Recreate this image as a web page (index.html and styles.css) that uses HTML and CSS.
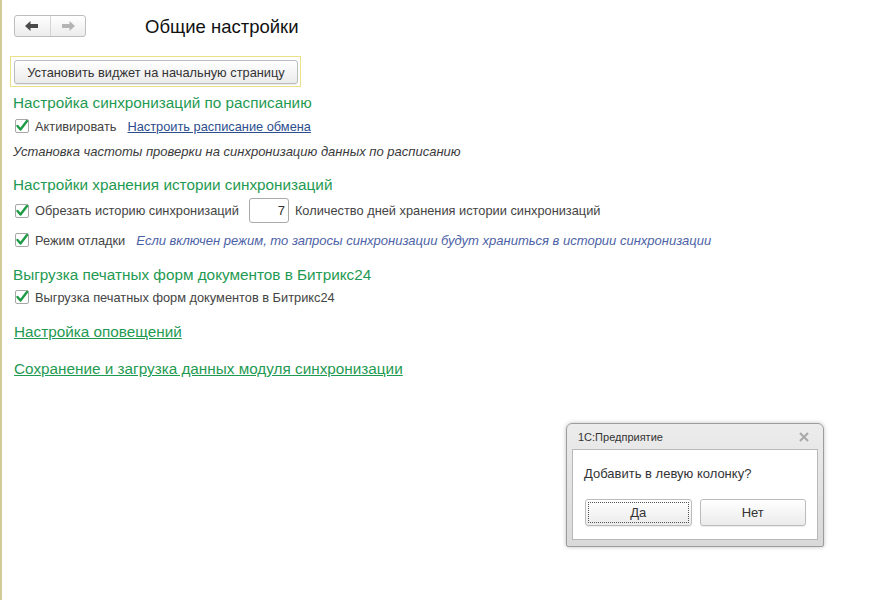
FILE: index.html
```html
<!DOCTYPE html>
<html lang="ru">
<head>
<meta charset="utf-8">
<title>Общие настройки</title>
<link rel="stylesheet" href="styles.css">
</head>
<body>
<div class="page">
  <div class="topbar">
    <div class="nav">
      <span class="nav-btn">
        <svg width="14" height="10" viewBox="0 0 14 10"><path d="M0 5 L5.5 0 L5.5 3 L13 3 L13 7 L5.5 7 L5.5 10 Z" fill="#4a4a4a"/></svg>
      </span>
      <span class="nav-btn">
        <svg width="14" height="10" viewBox="0 0 14 10"><path d="M14 5 L8.5 0 L8.5 3 L1 3 L1 7 L8.5 7 L8.5 10 Z" fill="#b4b4b4"/></svg>
      </span>
    </div>
    <h1 class="title">Общие настройки</h1>
  </div>

  <div class="widget-frame">
    <button class="btn widget-btn">Установить виджет на начальную страницу</button>
  </div>

  <div class="content">
    <div class="group-title g1">Настройка синхронизаций по расписанию</div>
    <div class="row r1">
      <span class="check"><svg width="14" height="14" viewBox="0 0 14 14"><path d="M2.5 7 L5.5 10.5 L12 2" fill="none" stroke="#1d9a45" stroke-width="2.4" stroke-linecap="round" stroke-linejoin="round"/></svg></span>
      <span class="label">Активировать</span>
      <a class="link-blue">Настроить расписание обмена</a>
    </div>
    <div class="note">Установка частоты проверки на синхронизацию данных по расписанию</div>

    <div class="group-title g2">Настройки хранения истории синхронизаций</div>
    <div class="row r2">
      <span class="check"><svg width="14" height="14" viewBox="0 0 14 14"><path d="M2.5 7 L5.5 10.5 L12 2" fill="none" stroke="#1d9a45" stroke-width="2.4" stroke-linecap="round" stroke-linejoin="round"/></svg></span>
      <span class="label">Обрезать историю синхронизаций</span>
      <span class="num-input">7</span>
      <span class="label">Количество дней хранения истории синхронизаций</span>
    </div>
    <div class="row r3">
      <span class="check"><svg width="14" height="14" viewBox="0 0 14 14"><path d="M2.5 7 L5.5 10.5 L12 2" fill="none" stroke="#1d9a45" stroke-width="2.4" stroke-linecap="round" stroke-linejoin="round"/></svg></span>
      <span class="label">Режим отладки</span>
      <span class="hint">Если включен режим, то запросы синхронизации будут храниться в истории синхронизации</span>
    </div>

    <div class="group-title g3">Выгрузка печатных форм документов в Битрикс24</div>
    <div class="row r4">
      <span class="check"><svg width="14" height="14" viewBox="0 0 14 14"><path d="M2.5 7 L5.5 10.5 L12 2" fill="none" stroke="#1d9a45" stroke-width="2.4" stroke-linecap="round" stroke-linejoin="round"/></svg></span>
      <span class="label">Выгрузка печатных форм документов в Битрикс24</span>
    </div>

    <a class="link-green l1">Настройка оповещений</a>
    <a class="link-green l2">Сохранение и загрузка данных модуля синхронизации</a>
  </div>

  <div class="dialog">
    <div class="dialog-head">
      <span class="dialog-title">1С:Предприятие</span>
      <svg class="dialog-close" width="10" height="10" viewBox="0 0 10 10"><path d="M1 1 L9 9 M9 1 L1 9" stroke="#a8a8a8" stroke-width="2"/></svg>
    </div>
    <div class="dialog-body">
      <div class="dialog-text">Добавить в левую колонку?</div>
      <div class="dialog-buttons">
        <button class="btn dlg-btn focused"><span>Да</span></button>
        <button class="btn dlg-btn"><span>Нет</span></button>
      </div>
    </div>
  </div>
</div>
</body>
</html>
```

FILE: styles.css
```css
html, body {
  margin: 0;
  padding: 0;
  background: #ffffff;
}

body {
  font-family: "Liberation Sans", Arial, sans-serif;
  color: #444444;
}

.page {
  position: relative;
  width: 878px;
  height: 600px;
  box-sizing: border-box;
  border-left: 2px solid #d2cb98;
  overflow: hidden;
}

.topbar {
  display: flex;
  align-items: center;
  padding: 13px 0 0 12px;
}

.nav {
  display: flex;
  width: 72px;
  height: 22px;
  box-sizing: border-box;
  border: 1px solid #bdbdbd;
  border-radius: 3px;
  background: linear-gradient(#ffffff, #ececec);
}

.nav-btn {
  flex: 1;
  display: flex;
  align-items: center;
  justify-content: center;
}

.nav-btn + .nav-btn {
  border-left: 1px solid #d4d4d4;
}

.title {
  margin: 3px 0 0 59px;
  font-size: 18.5px;
  font-weight: normal;
  color: #111111;
  line-height: 22px;
}

.widget-frame {
  display: inline-flex;
  margin: 18px 0 0 8px;
  padding: 3px 2px 2px 3px;
  border: 1px solid #ebdf88;
}

.btn {
  font-family: "Liberation Sans", Arial, sans-serif;
  color: #333333;
  border: 1px solid #bcbcbc;
  border-radius: 3px;
  background: linear-gradient(#ffffff, #ebebeb);
  box-shadow: 0 1px 1px rgba(0, 0, 0, 0.08);
  cursor: default;
}

.widget-btn {
  width: 284px;
  height: 24px;
  padding: 0;
  font-size: 12.8px;
}

.content {
  display: flex;
  flex-direction: column;
  align-items: flex-start;
  padding-left: 11px;
}

.group-title {
  font-size: 15.3px;
  line-height: 18px;
  color: #1f9a52;
}

.g1 { margin-top: 7px; }
.g2 { margin-top: 16px; }
.g3 { margin-top: 16px; }

.row {
  display: flex;
  align-items: center;
  height: 20px;
  font-size: 12.8px;
  padding-left: 2px;
}

.r1 { margin-top: 4px; }
.r2 { margin-top: 4px; height: 25px; }
.r3 { margin-top: 7px; }
.r4 { margin-top: 3px; }

.check {
  width: 14px;
  height: 14px;
  box-sizing: border-box;
  border: 1px solid #a7a7a7;
  border-radius: 2px;
  background: #ffffff;
  display: flex;
  align-items: center;
  justify-content: center;
  margin-right: 6px;
  overflow: visible;
}

.check svg {
  flex: none;
}

.label {
  color: #444444;
  white-space: nowrap;
}

.link-blue {
  margin-left: 11px;
  color: #2d4e8e;
  text-decoration: underline;
  white-space: nowrap;
}

.num-input {
  width: 40px;
  height: 25px;
  box-sizing: border-box;
  margin: 0 6px 0 10px;
  padding-right: 3px;
  border: 1px solid #a9a9a9;
  border-radius: 3px;
  text-align: right;
  line-height: 23px;
  font-size: 13px;
  color: #333333;
}

.hint {
  margin-left: 11px;
  font-size: 13px;
  font-style: italic;
  color: #4c62a6;
  white-space: nowrap;
}

.note {
  margin-top: 8px;
  font-size: 13px;
  line-height: 16px;
  font-style: italic;
  color: #3a3a3a;
}

.link-green {
  font-size: 15.3px;
  line-height: 18px;
  color: #1f9a52;
  text-decoration: underline;
  margin-left: 1px;
}

.l1 { margin-top: 16px; }
.l2 { margin-top: 19px; }

.dialog {
  position: absolute;
  left: 564px;
  top: 423px;
  width: 258px;
  height: 124px;
  box-sizing: border-box;
  border: 1px solid #9c9c9c;
  border-radius: 6px 6px 2px 2px;
  background: linear-gradient(#ececec, #d9d9d9);
  box-shadow: 0 0 4px rgba(0, 0, 0, 0.25);
  display: flex;
  flex-direction: column;
  padding: 0 5px 6px 5px;
}

.dialog-head {
  display: flex;
  align-items: center;
  justify-content: space-between;
  height: 25px;
  padding: 0 9px 0 6px;
}

.dialog-title {
  font-size: 11px;
  color: #333333;
}

.dialog-body {
  flex: 1;
  background: #ffffff;
  border: 1px solid #b9b9b9;
  padding: 0 11px;
}

.dialog-text {
  margin-top: 16px;
  font-size: 13px;
  line-height: 16px;
  color: #333333;
}

.dialog-buttons {
  display: flex;
  gap: 8px;
  margin-top: 17px;
  padding-left: 1px;
}

.dlg-btn {
  width: 107px;
  height: 27px;
  padding: 2px;
  font-size: 13px;
  display: flex;
}

.dlg-btn span {
  flex: 1;
  display: flex;
  align-items: center;
  justify-content: center;
  border: 1px dotted transparent;
}

.dlg-btn.focused span {
  border-color: #555555;
}
```
